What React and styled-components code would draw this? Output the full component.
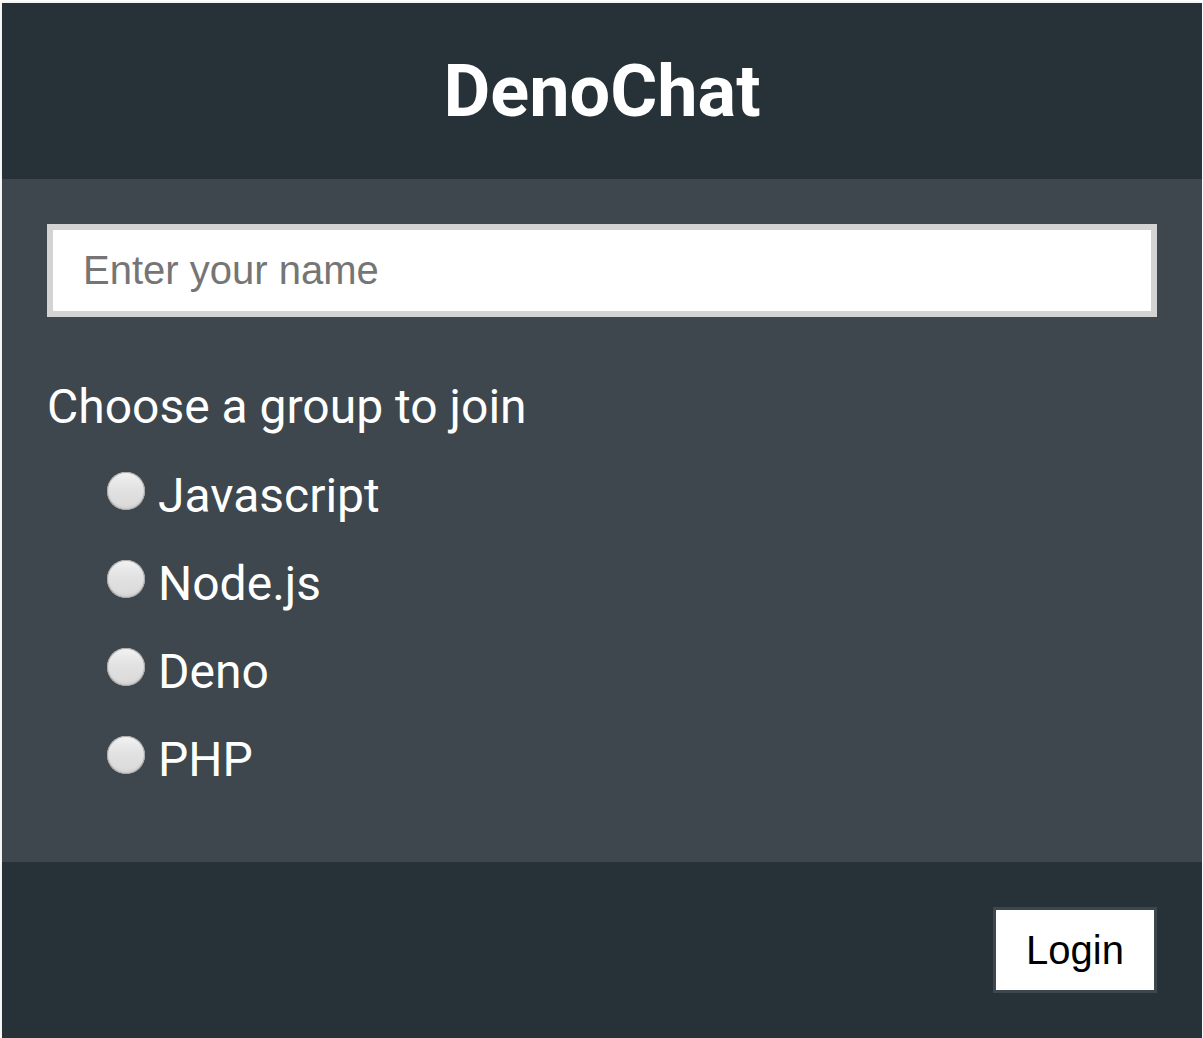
import React from 'react';
import styled, { createGlobalStyle } from 'styled-components';

const GlobalStyle = createGlobalStyle`
  html, body {
    margin: 0;
    padding: 0;
    background: #ffffff;
  }
  body {
    font-family: Roboto, "Liberation Sans", sans-serif;
  }
`;

const Page = styled.div`
  padding: 3px 1px 0 2px;
`;

const Card = styled.div`
  display: flex;
  flex-direction: column;
  box-shadow: -1px -1px 3px rgba(0, 0, 0, 0.08);
`;

const Header = styled.header`
  height: 176px;
  display: flex;
  align-items: center;
  justify-content: center;
  background: #263238;
`;

const Title = styled.h1`
  margin: 0;
  font-family: Roboto, sans-serif;
  font-weight: 700;
  font-size: 72px;
  color: #ffffff;
`;

const Body = styled.main`
  background: #3d474d;
  padding: 45px 45px 75px;
  display: flex;
  flex-direction: column;
`;

const NameInput = styled.input`
  box-sizing: border-box;
  width: 100%;
  height: 93px;
  border: 6px solid #d3d3d3;
  background: #ffffff;
  padding: 0 30px;
  font-family: "Liberation Sans", Arial, sans-serif;
  font-size: 40px;
  color: #333;
  outline: none;

  &::placeholder {
    color: #757575;
  }
`;

const Prompt = styled.p`
  margin: 62px 0 0;
  font-size: 48px;
  line-height: 56px;
  color: #ffffff;
`;

const Options = styled.div`
  display: flex;
  flex-direction: column;
  gap: 32px;
  padding-left: 60px;
  margin-top: 32px;
`;

const Option = styled.label`
  display: flex;
  align-items: center;
  gap: 13px;
  height: 56px;
  font-size: 48px;
  color: #ffffff;
  cursor: pointer;
`;

const Radio = styled.input`
  appearance: none;
  margin: 0;
  width: 38px;
  height: 38px;
  border-radius: 50%;
  flex: none;
  margin-top: -8px;
  background: linear-gradient(180deg, #f2f2f2 0%, #e2e2e2 45%, #d9d9d9 100%);
  box-shadow: inset 0 0 0 1px #a9a9a9, inset 0 -2px 3px rgba(0, 0, 0, 0.08);
`;

const Footer = styled.footer`
  background: #263238;
  padding: 45px;
  display: flex;
  justify-content: flex-end;
`;

const LoginButton = styled.button`
  box-sizing: border-box;
  width: 164px;
  height: 86px;
  border: 3px solid #3d474d;
  background: #ffffff;
  font-family: "Liberation Sans", Arial, sans-serif;
  font-size: 40px;
  color: #000000;
  cursor: pointer;
`;

const groups = ['Javascript', 'Node.js', 'Deno', 'PHP'];

export default function App() {
  return (
    <>
      <GlobalStyle />
      <Page>
        <Card>
          <Header>
            <Title>DenoChat</Title>
          </Header>
          <Body>
            <NameInput type="text" placeholder="Enter your name" />
            <Prompt>Choose a group to join</Prompt>
            <Options>
              {groups.map((g) => (
                <Option key={g}>
                  <Radio type="radio" name="group" value={g} />
                  {g}
                </Option>
              ))}
            </Options>
          </Body>
          <Footer>
            <LoginButton>Login</LoginButton>
          </Footer>
        </Card>
      </Page>
    </>
  );
}
